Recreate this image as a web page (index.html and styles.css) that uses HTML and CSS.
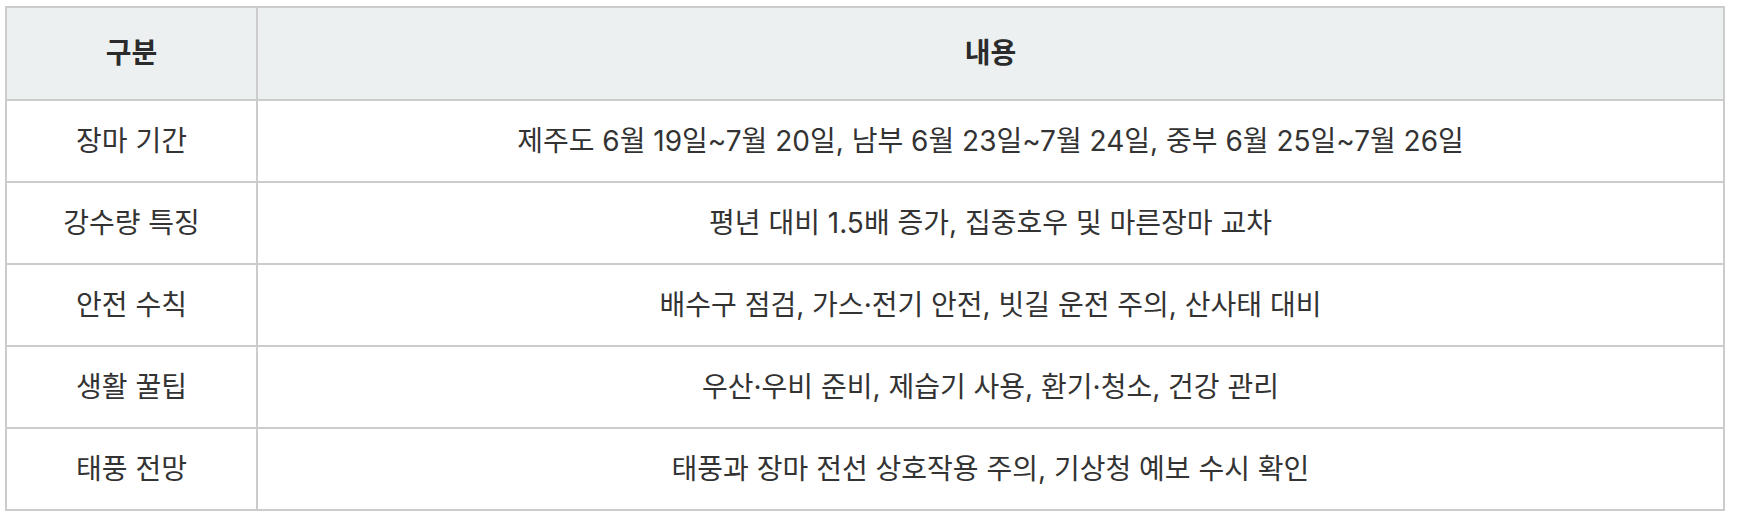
FILE: index.html
```html
<!DOCTYPE html>
<html lang="ko">
<head>
<meta charset="utf-8">
<title>장마 정보</title>
<link rel="stylesheet" href="styles.css">
</head>
<body>
<div class="wrap">
<table class="info">
  <thead>
    <tr><th class="c1">구분</th><th>내용</th></tr>
  </thead>
  <tbody>
    <tr><td>장마 기간</td><td>제주도 6월 19일~7월 20일, 남부 6월 23일~7월 24일, 중부 6월 25일~7월 26일</td></tr>
    <tr><td>강수량 특징</td><td>평년 대비 1.5배 증가, 집중호우 및 마른장마 교차</td></tr>
    <tr><td>안전 수칙</td><td>배수구 점검, 가스·전기 안전, 빗길 운전 주의, 산사태 대비</td></tr>
    <tr><td>생활 꿀팁</td><td>우산·우비 준비, 제습기 사용, 환기·청소, 건강 관리</td></tr>
    <tr><td>태풍 전망</td><td>태풍과 장마 전선 상호작용 주의, 기상청 예보 수시 확인</td></tr>
  </tbody>
</table>
</div>
</body>
</html>
```
FILE: styles.css
```css
html, body {
  margin: 0;
  padding: 0;
  background: #ffffff;
}
.wrap {
  padding: 6px 13px 0 5px;
}
.info {
  width: 100%;
  border-collapse: collapse;
  font-family: Inter, "Noto Sans CJK KR", "Noto Sans", sans-serif;
  font-size: 28px;
  color: #333333;
}
.info th,
.info td {
  border: 2px solid #cccccc;
  text-align: center;
  vertical-align: middle;
  line-height: 40px;
  padding: 20px 10px;
}
.info th {
  background: #ecf0f1;
  font-weight: 700;
  color: #2b2b2b;
  padding: 25px 10px 26px;
}
.info .c1 {
  width: 229px;
}
```
